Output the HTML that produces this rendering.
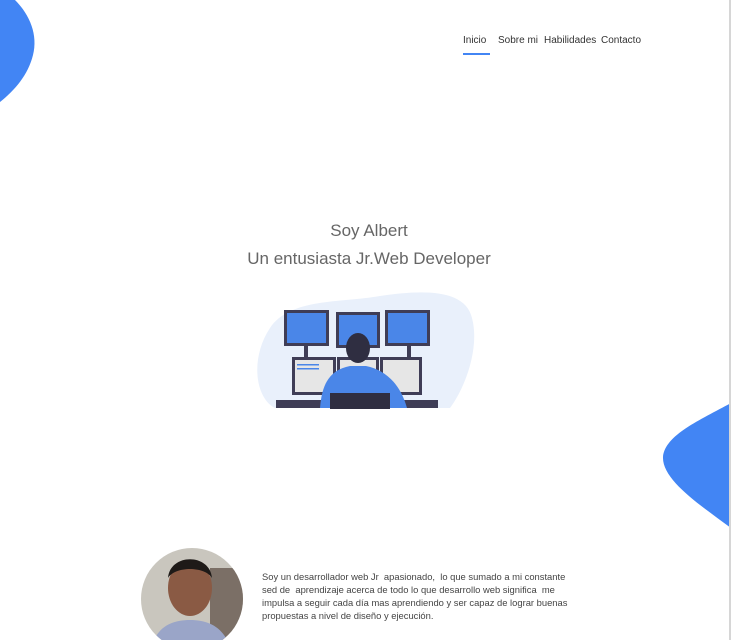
<!DOCTYPE html>
<html><head><meta charset="utf-8"><style>
html,body{margin:0;padding:0;width:731px;height:640px;overflow:hidden;background:#fff;font-family:"Liberation Sans",sans-serif;position:relative}
.edge{position:absolute;right:0;top:0;width:2px;height:640px;background:#d6d6d6}
nav{position:absolute;top:35px;left:463px;font-size:10px;color:#333;white-space:nowrap}
nav span{position:absolute;top:0}
.ul{position:absolute;left:463px;top:53px;width:27px;height:1.5px;background:#4285f4}
h1{position:absolute;margin:0;width:738px;text-align:center;font-weight:normal;color:#666;font-size:17px}
.txt{position:absolute;left:262px;top:570px;font-size:9.4px;line-height:13px;color:#444;white-space:nowrap}
</style></head><body>
<svg style="position:absolute;left:0;top:0" width="40" height="105"><path d="M0 0 L15 0 C30 15 38 35 33 55 C28 75 15 90 0 102 Z" fill="#4285f4"/></svg>
<svg style="position:absolute;left:660px;top:400px" width="71" height="132"><path d="M71 3 C40 20 5 35 3 57 C2 80 40 105 71 128 Z" fill="#4285f4"/></svg>
<div class="edge"></div>
<nav><span style="left:0">Inicio</span><span style="left:35px">Sobre mi</span><span style="left:81px">Habilidades</span><span style="left:138px">Contacto</span></nav>
<div class="ul"></div>
<h1 style="top:221px">Soy Albert</h1>
<h1 style="top:249px">Un entusiasta Jr.Web Developer</h1>
<svg style="position:absolute;left:250px;top:288px" width="230" height="125" viewBox="0 0 230 125">
<path d="M20 40 C40 10 90 15 130 8 C170 2 215 0 222 30 C230 60 215 100 200 120 L25 120 C5 110 0 70 20 40Z" fill="#e9f0fb"/>
<rect x="34" y="22" width="45" height="36" fill="#3f3d56"/><rect x="37" y="25" width="39" height="30" fill="#4a86e8"/>
<rect x="86" y="24" width="44" height="36" fill="#3f3d56"/><rect x="89" y="27" width="38" height="30" fill="#4a86e8"/>
<rect x="135" y="22" width="45" height="36" fill="#3f3d56"/><rect x="138" y="25" width="39" height="30" fill="#4a86e8"/>
<rect x="54" y="58" width="4" height="12" fill="#3f3d56"/><rect x="157" y="58" width="4" height="12" fill="#3f3d56"/>
<rect x="42" y="69" width="44" height="38" fill="#3f3d56"/><rect x="45" y="72" width="38" height="32" fill="#e6e6e6"/>
<rect x="87" y="69" width="42" height="20" fill="#3f3d56"/><rect x="90" y="72" width="36" height="16" fill="#e6e6e6"/>
<rect x="130" y="69" width="42" height="38" fill="#3f3d56"/><rect x="133" y="72" width="36" height="32" fill="#e6e6e6"/>
<rect x="47" y="76" width="22" height="1.5" fill="#4a86e8"/><rect x="47" y="80" width="22" height="1.5" fill="#4a86e8"/>
<rect x="26" y="112" width="162" height="8" fill="#3f3d56"/>
<path d="M70 120 C72 95 80 82 100 78 L116 78 C135 82 150 95 157 120Z" fill="#4a86e8"/>
<rect x="80" y="105" width="60" height="16" fill="#2f2e41"/>
<ellipse cx="108" cy="60" rx="12" ry="15" fill="#2f2e41"/>
</svg>
<svg style="position:absolute;left:140px;top:548px" width="104" height="92"><defs><clipPath id="c"><circle cx="52" cy="51" r="51"/></clipPath></defs><g clip-path="url(#c)"><rect width="104" height="104" fill="#c9c6be"/><rect x="70" y="20" width="34" height="80" fill="#7b6f66"/><ellipse cx="50" cy="40" rx="22" ry="28" fill="#8a5a44"/><path d="M28 30 C30 5 70 5 72 30 C65 18 35 18 28 30Z" fill="#1e1a18"/><path d="M10 104 C15 80 30 72 50 72 C70 72 85 80 92 104Z" fill="#9aa5c8"/></g></svg>
<div class="txt">Soy un desarrollador web Jr&nbsp; apasionado,&nbsp; lo que sumado a mi constante<br>sed de&nbsp; aprendizaje acerca de todo lo que desarrollo web significa&nbsp; me<br>impulsa a seguir cada día mas aprendiendo y ser capaz de lograr buenas<br>propuestas a nivel de diseño y ejecución.</div>
</body></html>
